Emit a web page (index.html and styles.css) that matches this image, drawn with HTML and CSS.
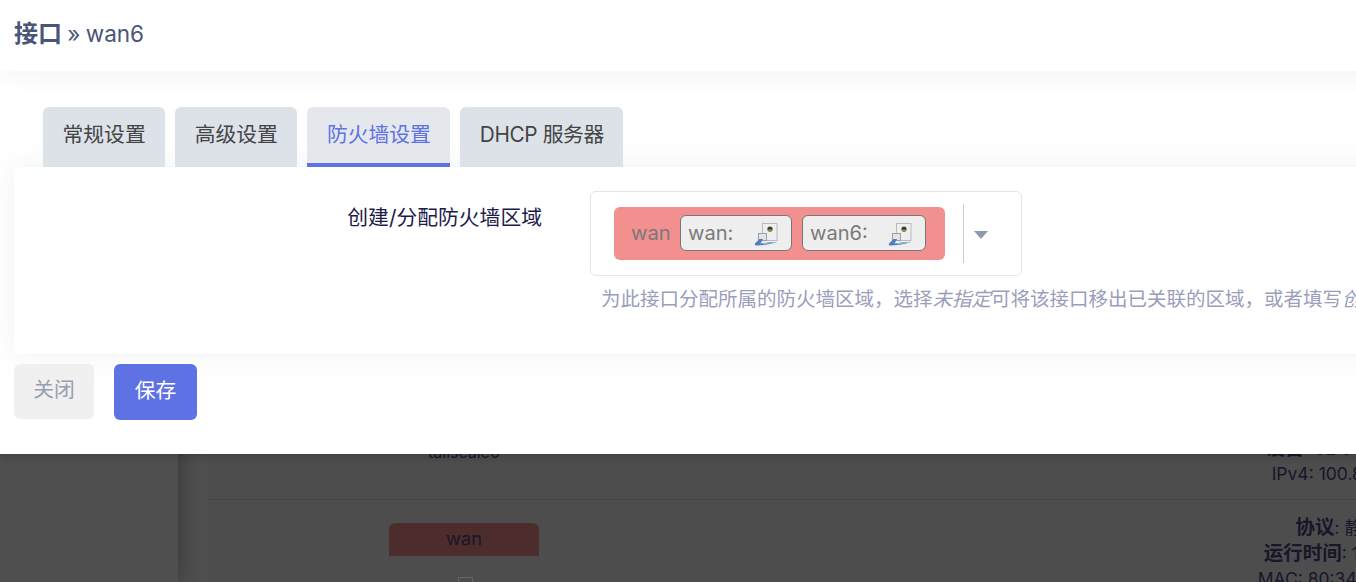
FILE: index.html
```html
<!DOCTYPE html>
<html lang="zh-CN">
<head>
    <meta charset="UTF-8">
    <title>接口 » wan6</title>
    <link rel="stylesheet" href="styles.css">
</head>
<body>

    <!-- Page behind the dialog -->
    <div class="page">
        <aside class="sidebar"></aside>
        <main class="content">
            <div class="row row-first">
                <div class="row-name">tailscale0</div>
                <div class="row-info">
                    <div><b>设备</b>: 02:00:00:00:00</div>
                    <div>IPv4: 100.84.10.2/32</div>
                </div>
            </div>
            <div class="row">
                <div class="row-name">
                    <div class="badge">wan</div>
                    <div class="badge-icon"></div>
                </div>
                <div class="row-info">
                    <div><b>协议</b>: 静态地址</div>
                    <div><b>运行时间</b>: 1h 22m 32s</div>
                    <div>MAC: 80:34:12:00:11:22</div>
                </div>
            </div>
        </main>
    </div>

    <!-- Dialog -->
    <div class="modal">
        <h2 class="modal-title"><b>接口</b> » wan6</h2>
        <div class="modal-body">
            <ul class="tabs">
                <li class="tab">常规设置</li>
                <li class="tab">高级设置</li>
                <li class="tab active">防火墙设置</li>
                <li class="tab tab-dhcp">DHCP 服务器</li>
            </ul>
            <div class="panel">
                <label class="field-label">创建/分配防火墙区域</label>
                <div class="field-value">
                    <div class="select">
                        <div class="zone">
                            <span class="zone-name">wan</span>
                            <span class="chip chip-wan">wan:
                                <svg class="net-icon" viewBox="0 0 24 26"><use href="#net"/></svg>
                            </span>
                            <span class="chip chip-wan6">wan6:
                                <svg class="net-icon" viewBox="0 0 24 26"><use href="#net"/></svg>
                            </span>
                        </div>
                        <div class="select-toggle"><span class="caret"></span></div>
                    </div>
                    <p class="hint">为此接口分配所属的防火墙区域，选择<em>未指定</em>可将该接口移出已关联的区域，或者填写<em>创建</em>以定义并分配一个新区域。</p>
                </div>
            </div>
            <div class="actions">
                <button class="btn btn-close">关闭</button>
                <button class="btn btn-save">保存</button>
            </div>
        </div>
    </div>

    <svg class="defs" width="0" height="0">
        <symbol id="net" viewBox="0 0 24 26">
            <rect x="8.5" y="3.5" width="14.5" height="17" fill="#eeeeee" stroke="#b8bcbc"/>
            <circle cx="16" cy="9" r="2.6" fill="#3a3a30"/>
            <path d="M13.6 9.5a2.4 2.4 0 0 0 4.8 0z" fill="#9a8d3c"/>
            <rect x="4.5" y="13.5" width="8" height="7" fill="#e4e4e4" stroke="#9a9fa1"/>
            <path d="M5.5 19 1 23.5c-.6 1.6.4 2.3 2 2l9-.8c3.500-.4 6-1.500 11-2.400-5-.7-8 .2-11 .5l-5.500.6 2.700-4.400z" fill="#4f7fc0"/>
            <path d="M9 23.800c4-.4 8-1.200 13-1.400" fill="none" stroke="#a5c0e0"/>
        </symbol>
    </svg>

</body>
</html>
```

FILE: styles.css
```css
* {
    box-sizing: border-box;
}
html, body {
    height: 100%;
}
body {
    margin: 0;
    overflow: hidden;
    background: #4f4f4f;
    font-family: Inter, "Noto Sans CJK SC", sans-serif;
    font-size: 18.2px;
    color: #14123a;
}

/* Page behind the dialog */
.page {
    display: flex;
    height: 582px;
    width: 1990px;
}
.sidebar {
    width: 178px;
    background: #4f4f4f;
    box-shadow: 4px 0 20px rgba(0, 0, 0, 0.25);
}
.content {
    flex: 1;
    margin-left: 30px;
    padding-top: 440px;
    background: #4d4d4d;
    color: #17162a;
}
.row {
    display: flex;
    border-top: 1px solid #454545;
}
.row-first {
    border-top: 0;
    height: 59px;
}
.row-name {
    width: 512px;
    text-align: center;
    padding-top: 23px;
}
.row-first .row-name {
    padding-top: 2px;
    font-size: 16px;
}
.row-first .row-info {
    margin-top: -19px;
}
.row-info {
    width: 1270px;
    padding-top: 14px;
    font-size: 17.5px;
    line-height: 26px;
    text-align: center;
    white-space: nowrap;
}
.row-info div {
    height: 26px;
}
.row-info b {
    font-size: 19.5px;
}
.badge {
    width: 150px;
    height: 33px;
    margin-left: 181px;
    background: #4d2c2c;
    border-radius: 6px 6px 0 0;
    line-height: 31px;
}
.badge-icon {
    width: 15px;
    height: 15px;
    margin: 21px 0 0 250px;
    border: 1px solid #666;
}

/* Dialog */
.modal {
    position: absolute;
    top: 0;
    left: 0;
    width: 1700px;
    height: 454px;
    background: #fff;
    box-shadow: 0 2px 8px rgba(0, 0, 0, 0.2);
}
.modal-title {
    margin: 0;
    height: 71px;
    padding-left: 14px;
    font-size: 22.5px;
    font-weight: 400;
    line-height: 67px;
    word-spacing: -1px;
    color: #4a5578;
    background: #fff;
    position: relative;
    box-shadow: 0 0 30px rgba(30, 50, 70, 0.07);
}
.modal-title b {
    font-size: 24px;
    font-weight: 700;
}
.modal-body {
    padding: 36px 0 0 14px;
}
.tabs {
    display: flex;
    position: relative;
    z-index: 1;
    gap: 10px;
    margin: 0;
    padding: 0 0 0 29px;
    list-style: none;
}
.tab {
    height: 60px;
    padding: 0 19.5px;
    background: #dce2e8;
    border-radius: 6px 6px 0 0;
    font-size: 20.8px;
    line-height: 56px;
    color: #444;
}
.tab.active {
    background: #e4e8ec;
    border-bottom: 4px solid #5e72e4;
    color: #5e72e4;
}
.tab-dhcp {
    letter-spacing: -0.4px;
}
.panel {
    display: flex;
    position: relative;
    height: 187px;
    padding-top: 24px;
    background: #fff;
    border-radius: 6px;
    box-shadow: 0 0 30px rgba(30, 50, 70, 0.07);
}
.field-label {
    width: 528px;
    padding-top: 12px;
    font-size: 20.8px;
    line-height: 30px;
    text-align: right;
    color: #1e1b4b;
}
.field-value {
    margin-left: 48px;
}
.select {
    display: flex;
    align-items: center;
    width: 432px;
    height: 85px;
    padding-left: 23px;
    border: 1px solid #e3e3ec;
    border-radius: 6px;
}
.zone {
    display: flex;
    align-items: center;
    gap: 10px;
    width: 331px;
    height: 53px;
    margin-top: -1px;
    padding-left: 17px;
    background: #f28f8f;
    border-radius: 6px;
    font-size: 20.1px;
    color: #7a7a7a;
}
.zone-name {
    width: 39px;
}
.chip {
    display: flex;
    align-items: center;
    justify-content: space-between;
    height: 36px;
    padding: 0 13px 0 7px;
    background: #eee;
    border: 1px solid #777;
    border-radius: 6px;
}
.chip-wan {
    width: 112px;
}
.chip-wan6 {
    width: 124px;
}
.net-icon {
    width: 24px;
    height: 26px;
    margin-top: -1px;
}
.select-toggle {
    display: flex;
    align-items: center;
    height: 59px;
    margin-left: 18px;
    padding-left: 10px;
    border-left: 1px solid #c9ced6;
}
.caret {
    width: 0;
    height: 0;
    margin-top: 2px;
    border-left: 7.5px solid transparent;
    border-right: 7.5px solid transparent;
    border-top: 8px solid #8d9ab0;
}
.hint {
    margin: 11px 0 0 11px;
    font-size: 19.5px;
    line-height: 24px;
    color: #9a9ebb;
    white-space: nowrap;
}
.actions {
    display: flex;
    align-items: flex-start;
    gap: 20px;
    margin-top: 10px;
    position: relative;
}
.btn {
    height: 56px;
    padding: 0 0 7px;
    border: 0;
    border-radius: 6px;
    font: inherit;
    font-size: 20.8px;
}
.btn-close {
    width: 80px;
    height: 55px;
    background: #f0f0f0;
    color: #95a1ad;
}
.btn-save {
    width: 83px;
    background: #5e72e4;
    color: #fff;
}
.defs {
    position: absolute;
}
```
